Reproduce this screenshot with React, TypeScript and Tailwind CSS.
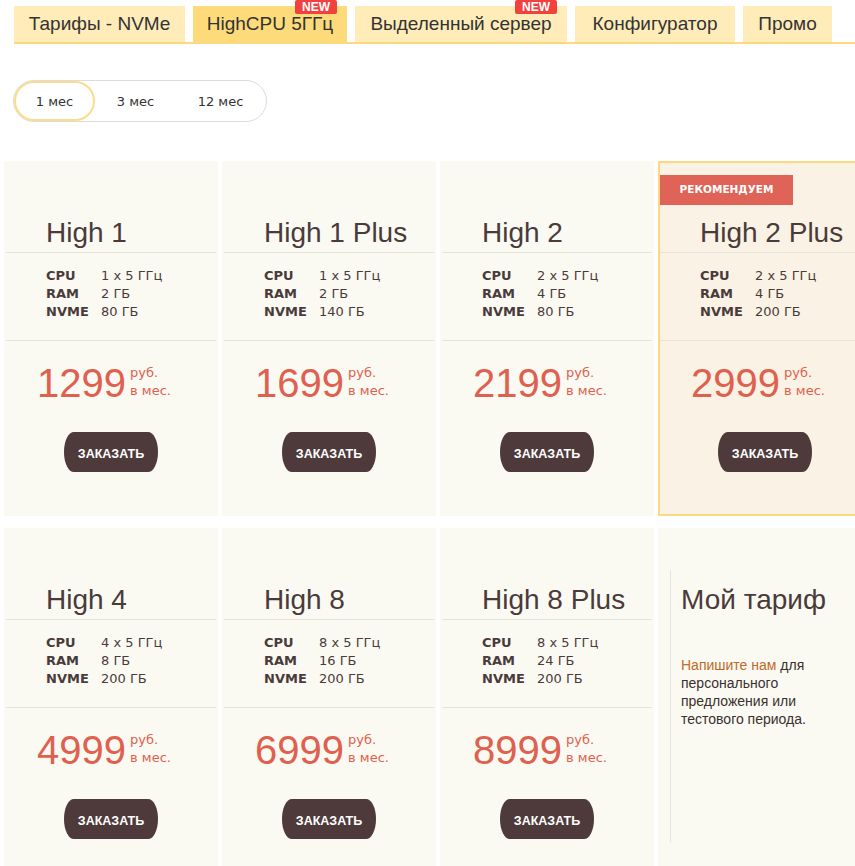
import React, { useState } from "react";

type Plan = {
  name: string;
  cpu: string;
  ram: string;
  nvme: string;
  price: string;
  featured?: boolean;
};

const plans: Plan[] = [
  { name: "High 1", cpu: "1 x 5 ГГц", ram: "2 ГБ", nvme: "80 ГБ", price: "1299" },
  { name: "High 1 Plus", cpu: "1 x 5 ГГц", ram: "2 ГБ", nvme: "140 ГБ", price: "1699" },
  { name: "High 2", cpu: "2 x 5 ГГц", ram: "4 ГБ", nvme: "80 ГБ", price: "2199" },
  { name: "High 2 Plus", cpu: "2 x 5 ГГц", ram: "4 ГБ", nvme: "200 ГБ", price: "2999", featured: true },
  { name: "High 4", cpu: "4 x 5 ГГц", ram: "8 ГБ", nvme: "200 ГБ", price: "4999" },
  { name: "High 8", cpu: "8 x 5 ГГц", ram: "16 ГБ", nvme: "200 ГБ", price: "6999" },
  { name: "High 8 Plus", cpu: "8 x 5 ГГц", ram: "24 ГБ", nvme: "200 ГБ", price: "8999" },
];

const tabs = [
  { label: "Тарифы - NVMe", w: "w-[171px]" },
  { label: "HighCPU 5ГГц", w: "w-[154px]", isNew: true },
  { label: "Выделенный сервер", w: "w-[212px]", isNew: true },
  { label: "Конфигуратор", w: "w-[160px]" },
  { label: "Промо", w: "w-[89px]" },
];

const periods = [
  { label: "1 мес", w: "w-[81px]" },
  { label: "3 мес", w: "w-[81px]" },
  { label: "12 мес", w: "w-[89px]" },
];

const sans = "font-['Liberation_Sans',Arial,sans-serif]";
const dv = "font-['DejaVu_Sans',Verdana,sans-serif]";

function PlanCard({ plan }: { plan: Plan }) {
  return (
    <div className={"relative h-[355px] " + (plan.featured ? "bg-[#faf2e4]" : "bg-[#fbfaf2]")}>
      {/* featured frame sits over the card */}
      {plan.featured && (
        <div className="absolute inset-0 border-2 border-[#fcd97e] pointer-events-none" />
      )}
      {plan.featured && (
        <div className="absolute left-[2px] top-[14px] w-[133px] h-[30px] bg-[#df6356] flex items-center justify-center">
          <span className={`${dv} text-[10.5px] font-bold text-white`}>РЕКОМЕНДУЕМ</span>
        </div>
      )}
      <div className="h-[91px] flex items-end pb-[5px] pl-[42px]">
        <h2 className={`${sans} text-[28px] leading-[28px] font-light text-[#4a3b3b]`}>{plan.name}</h2>
      </div>
      <div className="h-px mx-[2px] bg-[#e6e3da]" />
      <div className="h-[87px] pt-[14px] pl-[42px]">
        {[
          ["CPU", plan.cpu],
          ["RAM", plan.ram],
          ["NVME", plan.nvme],
        ].map(([k, v]) => (
          <div key={k} className={`${dv} flex text-[13px] leading-[18px] text-[#4a3b3b]`}>
            <span className="w-[55px] font-bold">{k}</span>
            <span>{v}</span>
          </div>
        ))}
      </div>
      <div className="h-px mx-[2px] bg-[#e6e3da]" />
      <div className="flex justify-center pr-[14px] mt-[22px]">
        <span className={`${sans} text-[40px] leading-[40px] font-light text-[#e0604f]`}>{plan.price}</span>
        <div className={`${dv} ml-[4px] mt-[1px] text-[13px] leading-[18px] text-[#e0604f]`}>
          <div>руб.</div>
          <div>в мес.</div>
        </div>
      </div>
      <div className="flex justify-center mt-[29px]">
        <button className="w-[94px] h-[40px] rounded-[10px/20px] bg-[#4e3a3a] text-white">
          <span className={`${sans} text-[12.5px] font-bold`}>ЗАКАЗАТЬ</span>
        </button>
      </div>
    </div>
  );
}

function CustomCard() {
  return (
    <div className="h-[355px] bg-[#fbfaf2] pt-[42px] pl-[12px]">
      <div className="h-[272px] border-l border-[#e6e3da] pl-[10px] pt-[16px]">
        <h2 className={`${sans} text-[28px] leading-[28px] font-light text-[#4a3b3b]`}>Мой тариф</h2>
        <p className={`${sans} mt-[42px] w-[150px] text-[14px] leading-[18px] text-[#3a3030]`}>
          <span className="text-[#c0692a]">Напишите нам</span> для персонального предложения или тестового периода.
        </p>
      </div>
    </div>
  );
}

export default function App() {
  const [period, setPeriod] = useState(0);
  const [tab, setTab] = useState(1);

  return (
    <div className="w-[855px] h-[866px] overflow-hidden bg-white">
      {/* tabs */}
      <div className="ml-[14px] pt-[6px] border-b-2 border-[#fcd97e] flex gap-[8px]">
        {tabs.map((t, i) => (
          <div
            key={t.label}
            onClick={() => setTab(i)}
            className={
              "relative h-[36px] flex items-center justify-center cursor-pointer " +
              t.w +
              (tab === i ? " bg-[#fddb7a]" : " bg-[#ffecb9]")
            }
          >
            <span className={`${sans} text-[19px] text-[#333]`}>{t.label}</span>
            {t.isNew && (
              <span className="absolute right-[10px] -top-[6px] h-[14px] w-[42px] rounded-[2px] bg-[#f2403f] flex items-center justify-center">
                <span className={`${sans} text-[12px] leading-[12px] font-bold text-white`}>NEW</span>
              </span>
            )}
          </div>
        ))}
      </div>

      {/* period switch */}
      <div className="ml-[13px] mt-[36px] w-[254px] h-[42px] rounded-full border border-[#dcdcdc] flex items-center">
        {periods.map((p, i) => (
          <button
            key={p.label}
            onClick={() => setPeriod(i)}
            className={
              "h-[40px] rounded-full flex items-center justify-center " +
              p.w +
              (period === i ? " border-2 border-[#fcdc8c] bg-white" : " border-2 border-transparent")
            }
          >
            <span className={`${dv} text-[13px] leading-[18px] pt-[2px] text-[#333]`}>{p.label}</span>
          </button>
        ))}
      </div>

      {/* plans */}
      <div className="mt-[39px] pl-[4px] grid grid-cols-[repeat(4,214px)] gap-x-[4px] gap-y-[12px]">
        {plans.map((p) => (
          <PlanCard key={p.name} plan={p} />
        ))}
        <CustomCard />
      </div>
    </div>
  );
}
